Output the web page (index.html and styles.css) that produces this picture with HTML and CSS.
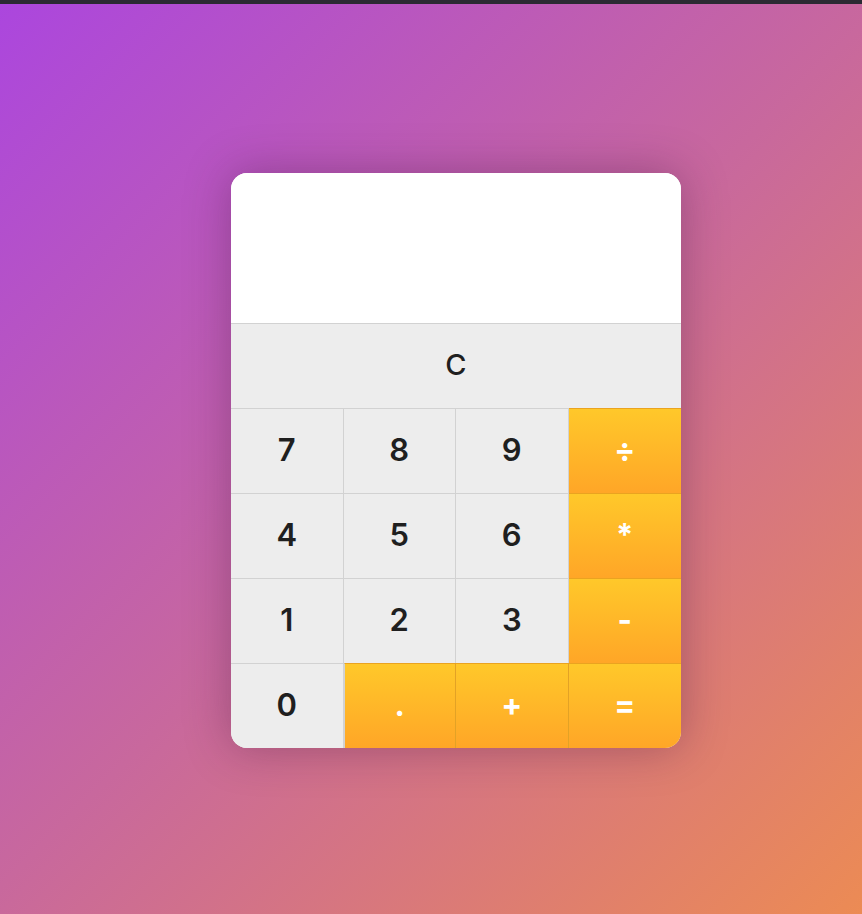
FILE: index.html
```html
<!DOCTYPE html>
<html>
<head>
<meta charset="utf-8">
<link rel="stylesheet" href="styles.css">
</head>
<body>
<div class="topbar"></div>
<main class="stage">
  <div class="calc">
    <div class="display"></div>
    <div class="keys">
      <button class="key clear">C</button>
      <button class="key">7</button>
      <button class="key">8</button>
      <button class="key">9</button>
      <button class="key op">÷</button>
      <button class="key">4</button>
      <button class="key">5</button>
      <button class="key">6</button>
      <button class="key op">*</button>
      <button class="key">1</button>
      <button class="key">2</button>
      <button class="key">3</button>
      <button class="key op">-</button>
      <button class="key">0</button>
      <button class="key op">.</button>
      <button class="key op">+</button>
      <button class="key op">=</button>
    </div>
  </div>
</main>
</body>
</html>
```
FILE: styles.css
```css
html, body {
  margin: 0;
  padding: 0;
  height: 914px;
  overflow: hidden;
}
body {
  background: linear-gradient(135deg, #ab46de 0%, #c8689d 50%, #ec8b54 100%);
  font-family: "Inter", "Open Sans", sans-serif;
}
.topbar {
  height: 4px;
  background: #2b2a33;
}
.stage {
  height: 910px;
  box-sizing: border-box;
  padding: 3px 0 0 50px;
  display: flex;
  align-items: center;
  justify-content: center;
}
.calc {
  width: 450px;
  border-radius: 16px;
  overflow: hidden;
  background: #ededed;
  box-shadow: 0 0 45px rgba(60, 20, 60, 0.35);
}
.display {
  height: 150px;
  background: #fff;
}
.keys {
  display: grid;
  grid-template-columns: repeat(4, 1fr);
  grid-auto-rows: 85px;
}
.key {
  margin: 0;
  padding: 0 0 3px 0;
  font-family: inherit;
  font-size: 31px;
  font-weight: 600;
  color: #1f1f1f;
  background: #ededed;
  border: 0;
  border-top: 1px solid #d2d2d2;
  border-right: 1px solid #d2d2d2;
  display: flex;
  align-items: center;
  justify-content: center;
}
.keys > .key:nth-child(4n+1) {
  border-right: 0;
}
.clear {
  grid-column: 1 / span 4;
  border-right: 0;
  font-size: 29px;
  font-weight: 500;
}
.op {
  color: #fff;
  font-weight: 700;
  background: linear-gradient(to bottom, #ffc82a, #ffa627);
  border-top-color: #eaa320;
  border-right-color: #e3a225;
}
.key.op:nth-child(4n+1) {
  border-right: 0;
}
.keys > .key:nth-child(15) {
  border-left: 1px solid #d2d2d2;
}
```
